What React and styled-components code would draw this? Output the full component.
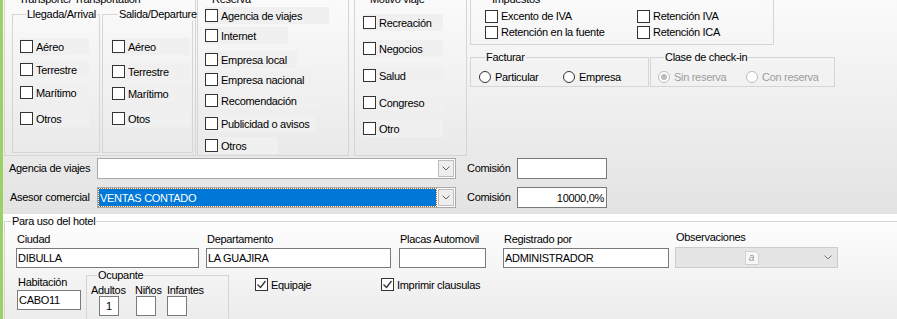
import React from "react";
import styled, { createGlobalStyle } from "styled-components";

const GlobalStyle = createGlobalStyle`
  html, body {
    margin: 0;
    padding: 0;
    background: #f0f0f0;
  }
  body {
    font-family: "Liberation Sans", Arial, sans-serif;
    font-size: 11px;
    letter-spacing: -0.3px;
    color: #000;
  }
  * {
    box-sizing: border-box;
  }
`;

const Window = styled.div`
  width: 897px;
  height: 319px;
  overflow: hidden;
  border-left: 3px solid #9bd267;
  display: flex;
  flex-direction: column;
`;

const TopPanel = styled.div`
  flex-shrink: 0;
  margin-top: -7px;
  height: 221px;
  padding-left: 1px;
  background: linear-gradient(#fbfbfb, #e3e3e3);
`;

const BottomPanel = styled.div`
  flex: 1;
  padding: 1px 0 0 1px;
  background: linear-gradient(#ffffff, #e9e9e9);
`;

const Row = styled.div`
  display: flex;
  align-items: ${(p) => p.$align || "flex-start"};
  margin-top: ${(p) => p.$mt || 0}px;
  margin-left: ${(p) => p.$ml || 0}px;
`;

const Column = styled.div`
  display: flex;
  flex-direction: column;
  margin-left: ${(p) => p.$ml || 0}px;
  margin-top: ${(p) => p.$mt || 0}px;
`;

const Group = styled.fieldset`
  margin: ${(p) => p.$mt || 0}px 0 0 ${(p) => p.$ml || 0}px;
  padding: 0 0 0 ${(p) => p.$pl || 0}px;
  width: ${(p) => p.$w}px;
  height: ${(p) => p.$h}px;
  min-width: 0;
  border: 1px solid #d5d5d5;
  display: flex;
  flex-direction: ${(p) => (p.$row ? "row" : "column")};
  align-items: flex-start;
`;

const Legend = styled.legend`
  margin-left: 6px;
  padding: 0 1px;
  line-height: 13px;
  font-size: 11px;
  color: #000;
  white-space: nowrap;
`;

const CheckItem = styled.div`
  display: flex;
  align-items: center;
  gap: 3px;
  height: ${(p) => p.$h || 17}px;
  width: ${(p) => (p.$w ? `${p.$w}px` : "auto")};
  margin-top: ${(p) => p.$mt || 0}px;
  margin-left: ${(p) => p.$ml || 0}px;
  background: ${(p) => (p.$bg ? "#f0f0f0" : "transparent")};
  white-space: nowrap;
  color: ${(p) => (p.$disabled ? "#9d9d9d" : "#000")};
`;

const Box = styled.span`
  width: 13px;
  height: 13px;
  flex-shrink: 0;
  border: 1px solid #333;
  background: #fff;
  display: flex;
  align-items: center;
  justify-content: center;
`;

const Radio = styled.span`
  width: 12px;
  height: 12px;
  flex-shrink: 0;
  border-radius: 50%;
  border: 1px solid ${(p) => (p.$disabled ? "#bcbcbc" : "#333")};
  background: #fff;
  display: flex;
  align-items: center;
  justify-content: center;
  margin-right: 1px;
`;

const Dot = styled.span`
  width: 6px;
  height: 6px;
  border-radius: 50%;
  background: #bcbcbc;
`;

const ImpGrid = styled.div`
  display: grid;
  grid-template-columns: 152px auto;
  grid-auto-rows: 16px;
  margin-top: 2px;
`;

const Label = styled.span`
  display: block;
  width: ${(p) => (p.$w ? `${p.$w}px` : "auto")};
  margin-left: ${(p) => p.$ml || 0}px;
  margin-top: ${(p) => p.$mt || 0}px;
  line-height: 13px;
  white-space: nowrap;
`;

const TextBox = styled.div`
  width: ${(p) => p.$w}px;
  height: ${(p) => p.$h || 20}px;
  margin-top: ${(p) => p.$mt || 0}px;
  margin-left: ${(p) => p.$ml || 0}px;
  border: 1px solid #7a7a7a;
  background: #fff;
  padding: 0 ${(p) => (p.$right ? 2 : 1)}px 0 1px;
  display: flex;
  align-items: center;
  justify-content: ${(p) => (p.$right ? "flex-end" : p.$center ? "center" : "flex-start")};
  white-space: nowrap;
`;

const Combo = styled.div`
  width: ${(p) => p.$w}px;
  height: 21px;
  margin-top: ${(p) => p.$mt || 0}px;
  border: 1px solid ${(p) => (p.$disabled ? "#cccccc" : "#a9a9a9")};
  background: ${(p) => (p.$disabled ? "#e5e5e5" : "#fff")};
  padding: 1px;
  display: flex;
  align-items: stretch;
`;

const ComboText = styled.div`
  flex: 1;
  display: flex;
  align-items: center;
  padding-left: 1px;
  margin-right: 2px;
  background: ${(p) => (p.$selected ? "#0078d7" : "transparent")};
  color: ${(p) => (p.$selected ? "#fff" : "#000")};
  outline: ${(p) => (p.$selected ? "1px dotted #b06a20" : "none")};
  white-space: nowrap;
`;

const DropButton = styled.div`
  width: 16px;
  border: 1px solid ${(p) => (p.$flat ? "transparent" : "#bdbdbd")};
  background: ${(p) => (p.$flat ? "transparent" : "#eeeeee")};
  display: flex;
  align-items: center;
  justify-content: center;
`;

const DisabledMiddle = styled.div`
  flex: 1;
  display: flex;
  align-items: center;
  justify-content: center;
  padding-left: 6px;
`;

const DocIcon = styled.span`
  width: 14px;
  height: 14px;
  border: 1px solid #d0d0d0;
  border-top-right-radius: 4px;
  background: #f7f7f7;
  color: #9a9a9a;
  font-size: 10px;
  line-height: 12px;
  text-align: center;
  font-style: italic;
`;

const OccGrid = styled.div`
  display: grid;
  grid-template-columns: 44px 32px 40px;
  grid-template-rows: 12px 20px;
  margin-top: 2px;
`;

const Chevron = ({ color = "#606060" }) => (
  <svg width="8" height="5" viewBox="0 0 8 5">
    <polyline points="0.5,0.5 4,4 7.5,0.5" fill="none" stroke={color} strokeWidth="1" />
  </svg>
);

const Tick = () => (
  <svg width="11" height="11" viewBox="0 0 11 11">
    <polyline points="1.5,5.5 4.5,8.5 9.5,2" fill="none" stroke="#333" strokeWidth="1.3" />
  </svg>
);

const Check = ({ label, checked, ...rest }) => (
  <CheckItem {...rest}>
    <Box>{checked && <Tick />}</Box>
    {label}
  </CheckItem>
);

const RadioItem = ({ label, checked, disabled, ...rest }) => (
  <CheckItem $h={16} $disabled={disabled} {...rest}>
    <Radio $disabled={disabled}>{checked && <Dot />}</Radio>
    {label}
  </CheckItem>
);

const Field = ({ label, value, w, ml, labelMt = 4, boxMt = 3, lml = 1 }) => (
  <Column $ml={ml}>
    <Label $mt={labelMt} $ml={lml}>{label}</Label>
    <TextBox $w={w} $mt={boxMt}>{value}</TextBox>
  </Column>
);

const llegada = [
  { t: "Aéreo", mt: 17 },
  { t: "Terrestre", mt: 6 },
  { t: "Marítimo", mt: 6 },
  { t: "Otros", mt: 9 },
];

const salida = [
  { t: "Aéreo", mt: 17 },
  { t: "Terrestre", mt: 8 },
  { t: "Marítimo", mt: 5 },
  { t: "Otos", mt: 8 },
];

const reserva = [
  { t: "Agencia de viajes", mt: 1, w: 124 },
  { t: "Internet", mt: 3, w: 83 },
  { t: "Empresa local", mt: 7, w: 92 },
  { t: "Empresa nacional", mt: 3, w: 107 },
  { t: "Recomendación", mt: 4, w: 112 },
  { t: "Publicidad o avisos", mt: 6, w: 111 },
  { t: "Otros", mt: 5, w: 73 },
];

const motivo = [
  { t: "Recreación", mt: 8 },
  { t: "Negocios", mt: 9 },
  { t: "Salud", mt: 10 },
  { t: "Congreso", mt: 10 },
  { t: "Otro", mt: 9 },
];

export default function App() {
  return (
    <>
      <GlobalStyle />
      <Window>
        <TopPanel>
          <Row>
            <Group $w={192} $h={163} $pl={7} $row>
              <Legend>Transporte/ Transportation</Legend>
              <Group $w={88} $h={145} $pl={7} $mt={2}>
                <Legend>Llegada/Arrival</Legend>
                {llegada.map((c) => (
                  <Check key={c.t} label={c.t} $mt={c.mt} $w={69} $bg />
                ))}
              </Group>
              <Group $w={91} $h={145} $pl={9} $mt={2} $ml={2}>
                <Legend>Salida/Departure</Legend>
                {salida.map((c) => (
                  <Check key={c.t} label={c.t} $mt={c.mt} $w={78} $bg />
                ))}
              </Group>
            </Group>

            <Group $w={152} $h={163} $pl={7} $ml={1}>
              <Legend>Reserva</Legend>
              {reserva.map((c) => (
                <Check key={c.t} label={c.t} $mt={c.mt} $w={c.w} $bg />
              ))}
            </Group>

            <Group $w={113} $h={163} $pl={8} $ml={5}>
              <Legend>Motivo viaje</Legend>
              {motivo.map((c) => (
                <Check key={c.t} label={c.t} $mt={c.mt} $w={80} $bg />
              ))}
            </Group>

            <Column $ml={3}>
              <Group $w={304} $h={52} $pl={14}>
                <Legend>Impuestos</Legend>
                <ImpGrid>
                  <Check label="Excento de IVA" $h={16} />
                  <Check label="Retención IVA" $h={16} />
                  <Check label="Retención en la fuente" $h={16} />
                  <Check label="Retención ICA" $h={16} />
                </ImpGrid>
              </Group>
              <Row $mt={6}>
                <Group $w={179} $h={36} $pl={8} $row>
                  <Legend>Facturar</Legend>
                  <RadioItem label="Particular" $mt={5} $w={84} />
                  <RadioItem label="Empresa" $mt={5} />
                </Group>
                <Group $w={185} $h={36} $pl={7} $ml={1} $row>
                  <Legend>Clase de check-in</Legend>
                  <RadioItem label="Sin reserva" checked disabled $mt={5} $w={88} />
                  <RadioItem label="Con reserva" disabled $mt={5} />
                </Group>
              </Row>
            </Column>
          </Row>

          <Row $align="center" $mt={2}>
            <Label $ml={5} $w={88}>Agencia de viajes</Label>
            <Combo $w={359}>
              <ComboText />
              <DropButton>
                <Chevron />
              </DropButton>
            </Combo>
            <Label $ml={11} $w={50}>Comisión</Label>
            <TextBox $w={90} $h={21} $right />
          </Row>

          <Row $align="center" $mt={8}>
            <Label $ml={6} $w={87}>Asesor comercial</Label>
            <Combo $w={359}>
              <ComboText $selected>VENTAS CONTADO</ComboText>
              <DropButton>
                <Chevron />
              </DropButton>
            </Combo>
            <Label $ml={11} $w={50}>Comisión</Label>
            <TextBox $w={90} $h={21} $right>10000,0%</TextBox>
          </Row>
        </TopPanel>

        <BottomPanel>
          <Group $w={900} $h={120}>
            <Legend>Para uso del hotel</Legend>
            <Row>
              <Field label="Ciudad" value="DIBULLA" w={183} ml={11} labelMt={5} boxMt={2} />
              <Field label="Departamento" value="LA GUAJIRA" w={185} ml={7} labelMt={5} boxMt={2} />
              <Field label="Placas Automovil" value="" w={87} ml={8} labelMt={5} boxMt={2} />
              <Field label="Registrado por" value="ADMINISTRADOR" w={166} ml={17} labelMt={5} boxMt={2} />
              <Column $ml={6}>
                <Label $mt={3} $ml={1}>Observaciones</Label>
                <Combo $w={163} $mt={3} $disabled>
                  <DisabledMiddle>
                    <DocIcon>a</DocIcon>
                  </DisabledMiddle>
                  <DropButton $flat>
                    <Chevron color="#7a7a7a" />
                  </DropButton>
                </Combo>
              </Column>
            </Row>

            <Row $mt={1}>
              <Field label="Habitación" value="CABO11" w={64} ml={12} labelMt={7} boxMt={1} />
              <Group $w={143} $h={60} $pl={4} $ml={5}>
                <Legend>Ocupante</Legend>
                <OccGrid>
                  <Label>Adultos</Label>
                  <Label>Niños</Label>
                  <Label>Infantes</Label>
                  <TextBox $w={20} $ml={8} $center>1</TextBox>
                  <TextBox $w={20} $ml={1} />
                  <TextBox $w={20} />
                </OccGrid>
              </Group>
              <Check label="Equipaje" checked $h={15} $mt={8} $ml={26} $w={126} />
              <Check label="Imprimir clausulas" checked $h={15} $mt={8} />
            </Row>
          </Group>
        </BottomPanel>
      </Window>
    </>
  );
}
